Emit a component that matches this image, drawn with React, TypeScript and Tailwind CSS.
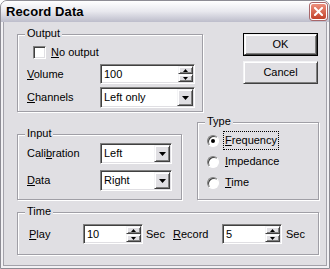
import React from "react";

const sunken =
  "bg-white border border-t-[#808080] border-l-[#808080] border-b-white border-r-white shadow-[inset_1px_1px_0_#404040,inset_-1px_-1px_0_#e0dfe3] p-[1px]";
const raised =
  "bg-[#e0dfe3] border border-t-[#f4f4f6] border-l-[#f4f4f6] border-b-[#404040] border-r-[#404040] shadow-[inset_1px_1px_0_#ffffff,inset_-1px_-1px_0_#808080]";

function Group({ label, className, children }: { label: string; className: string; children: React.ReactNode }) {
  return (
    <div className={`relative border border-[#a09fa6] shadow-[1px_1px_0_#ffffff,inset_1px_1px_0_#ffffff] ${className}`}>
      <span className="absolute -top-[8px] left-[7px] bg-[#e0dfe3] px-[2px] text-[11px] leading-[13px]">{label}</span>
      {children}
    </div>
  );
}

function Spin({ value, width }: { value: string; width: string }) {
  return (
    <div className={`${sunken} ${width} h-[20px] flex`}>
      <div className="flex-1 pl-[2px] text-[11px] leading-[16px]">{value}</div>
      <div className="flex w-[15px] flex-col">
        <div className={`${raised} flex h-[8px] items-center justify-center`}>
          <svg width="5" height="3" viewBox="0 0 5 3">
            <polygon points="2.5,0 5,3 0,3" fill="#000" />
          </svg>
        </div>
        <div className={`${raised} flex h-[8px] items-center justify-center`}>
          <svg width="5" height="3" viewBox="0 0 5 3">
            <polygon points="0,0 5,0 2.5,3" fill="#000" />
          </svg>
        </div>
      </div>
    </div>
  );
}

function Combo({ value, width }: { value: string; width: string }) {
  return (
    <div className={`${sunken} ${width} h-[21px] flex`}>
      <div className="flex-1 pl-[2px] text-[11px] leading-[17px]">{value}</div>
      <div className={`${raised} flex w-[16px] items-center justify-center`}>
        <svg width="7" height="4" viewBox="0 0 7 4">
          <polygon points="0,0 7,0 3.5,4" fill="#000" />
        </svg>
      </div>
    </div>
  );
}

function Radio({ label, checked }: { label: React.ReactNode; checked?: boolean }) {
  return (
    <div className="flex h-[13px] items-center">
      <div className="flex h-[12px] w-[12px] items-center justify-center rounded-full border border-t-[#808080] border-l-[#808080] border-b-white border-r-white bg-white shadow-[inset_1px_1px_0_#404040]">
        {checked && <div className="h-[4px] w-[4px] rounded-full bg-black" />}
      </div>
      <span
        className={`ml-[4px] border px-[1px] py-[2px] text-[11px] leading-[13px] ${
          checked ? "border-dotted border-black" : "border-transparent"
        }`}
      >
        {label}
      </span>
    </div>
  );
}

function Btn({ children, isDefault }: { children: React.ReactNode; isDefault?: boolean }) {
  return (
    <div className={`h-[23px] w-[75px] ${isDefault ? "border border-black" : ""}`}>
      <div className={`${raised} flex h-full w-full items-center justify-center text-[11px]`}>{children}</div>
    </div>
  );
}

export default function App() {
  return (
    <div className="flex h-[269px] w-[330px] flex-col overflow-hidden rounded-t-[7px] border border-[#8d8c94] bg-[#e0dfe3] font-[Liberation_Sans,Arial,sans-serif] text-black">
      {/* Title bar */}
      <div className="flex h-[21px] shrink-0 items-center justify-between bg-linear-to-b from-[#ffffff] via-[#e8e8ee] to-[#bdbdcb] pl-[5px] pr-[2px]">
        <span className="text-[13px] font-bold leading-none tracking-[0.1px]">Record Data</span>
        <div className="flex h-[17px] w-[17px] items-center justify-center rounded-[3px] border border-white bg-linear-to-b from-[#ec8f7c] to-[#c2402a] shadow-[0_0_0_1px_#a8676a]">
          <svg width="9" height="9" viewBox="0 0 9 9">
            <path d="M1 1L8 8M8 1L1 8" stroke="#fff" strokeWidth="2" strokeLinecap="square" />
          </svg>
        </div>
      </div>

      {/* Body */}
      <div className="flex flex-1 flex-col border-x-2 border-b-2 border-[#f2f1f4] pl-[14px] pt-[11px] shadow-[inset_1px_0_0_#a3a2aa,inset_-1px_-1px_0_#a3a2aa]">
        <div className="flex items-start">
          <Group label="Output" className="mt-[1px] h-[78px] w-[186px]">
            <div className="flex flex-col pl-[9px] pt-[11px]">
              <div className="ml-[6px] flex items-center">
                <div className={`h-[13px] w-[13px] ${sunken}`} />
                <span className="ml-[5px] text-[11px] leading-none">
                  <u>N</u>o output
                </span>
              </div>
              <div className="mt-[5px] flex items-center">
                <span className="w-[73px] text-[11px]">
                  <u>V</u>olume
                </span>
                <Spin value="100" width="w-[95px]" />
              </div>
              <div className="mt-[3px] flex items-center">
                <span className="w-[73px] text-[11px]">
                  <u>C</u>hannels
                </span>
                <Combo value="Left only" width="w-[95px]" />
              </div>
            </div>
          </Group>
          <div className="ml-[40px] flex flex-col gap-[5px]">
            <Btn isDefault>OK</Btn>
            <Btn>Cancel</Btn>
          </div>
        </div>

        <div className="mt-[10px] flex items-end">
          <Group label="Input" className="h-[66px] w-[165px]">
            <div className="flex flex-col pl-[9px] pt-[8px]">
              <div className="flex items-center">
                <span className="w-[73px] text-[11px]">
                  Cali<u>b</u>ration
                </span>
                <Combo value="Left" width="w-[72px]" />
              </div>
              <div className="mt-[6px] flex items-center">
                <span className="w-[73px] text-[11px]">
                  <u>D</u>ata
                </span>
                <Combo value="Right" width="w-[72px]" />
              </div>
            </div>
          </Group>
          <Group label="Type" className="ml-[15px] h-[78px] w-[122px]">
            <div className="flex flex-col gap-[8px] pl-[9px] pt-[11px]">
              <Radio checked label={<><u>F</u>requency</>} />
              <Radio label={<><u>I</u>mpedance</>} />
              <Radio label={<><u>T</u>ime</>} />
            </div>
          </Group>
        </div>

        <Group label="Time" className="mt-[12px] h-[43px] w-[302px]">
          <div className="flex items-center pl-[11px] pt-[11px]">
            <span className="w-[54px] text-[11px]">
              <u>P</u>lay
            </span>
            <Spin value="10" width="w-[60px]" />
            <span className="ml-[3px] w-[27px] text-[11px]">Sec</span>
            <span className="w-[49px] text-[11px]">
              <u>R</u>ecord
            </span>
            <Spin value="5" width="w-[60px]" />
            <span className="ml-[4px] text-[11px]">Sec</span>
          </div>
        </Group>
      </div>
    </div>
  );
}
